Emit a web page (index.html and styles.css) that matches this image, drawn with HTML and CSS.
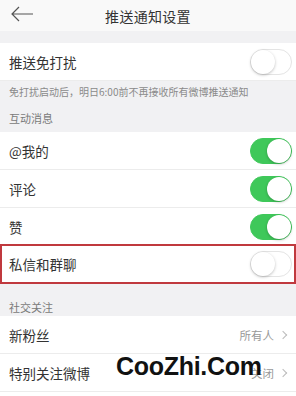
FILE: index.html
```html
<!DOCTYPE html>
<html lang="zh">
<head>
<meta charset="utf-8">
<link rel="stylesheet" href="styles.css">
</head>
<body>
<div class="page">
  <header class="header">
    <svg class="back" width="24" height="16" viewBox="0 0 24 16"><path d="M23 8H2M9 1L2 8l7 7" fill="none" stroke="#555" stroke-width="1.2"/></svg>
    <div class="title">推送通知设置</div>
  </header>
  <div class="gap"></div>
  <div class="row"><span class="label">推送免打扰</span><span class="toggle"></span></div>
  <div class="note">免打扰启动后，明日6:00前不再接收所有微博推送通知</div>
  <div class="section">互动消息</div>
  <div class="row"><span class="label">@我的</span><span class="toggle on"></span></div>
  <div class="row"><span class="label">评论</span><span class="toggle on"></span></div>
  <div class="row"><span class="label">赞</span><span class="toggle on"></span></div>
  <div class="row boxed"><span class="label">私信和群聊</span><span class="toggle"></span></div>
  <div class="section social">社交关注</div>
  <div class="row"><span class="label">新粉丝</span><span class="value">所有人<span class="chev"></span></span></div>
  <div class="row"><span class="label">特别关注微博</span><span class="value">关闭<span class="chev"></span></span></div>
  <div class="row"></div>
  <div class="watermark">CooZhi.Com</div>
</div>
</body>
</html>
```
FILE: styles.css
```css
* { box-sizing: border-box; }
html, body { margin: 0; padding: 0; }
body { font-family: "Noto Sans CJK SC", "Liberation Sans", sans-serif; background: #f1f1f3; }
.page { position: relative; width: 296px; height: 396px; overflow: hidden; }
.header { height: 31px; background: #f9f9f9; display: flex; align-items: center; justify-content: center; position: relative; }
.back { position: absolute; left: 10px; top: 6px; }
.title { font-size: 14px; color: #333; letter-spacing: 0.3px; }
.gap { height: 12px; }
.row { height: 38px; background: #fff; display: flex; align-items: center; justify-content: space-between; padding: 0 4px 0 9px; border-bottom: 1px solid #ececec; }
.label { font-size: 13.5px; color: #333; }
.toggle { width: 42px; height: 26px; border-radius: 13px; border: 1px solid #e4e4e4; background: #fff; position: relative; }
.toggle::after { content: ""; position: absolute; left: 0; top: 0; width: 24px; height: 24px; border-radius: 50%; background: #fff; box-shadow: 0 1px 3px rgba(0,0,0,0.25); }
.toggle.on { background: #3fc85a; border-color: #3fc85a; }
.toggle.on::after { left: 16px; }
.note { font-size: 10px; color: #8a8a8a; padding: 4px 9px 0; height: 26px; line-height: 14px; border-top: 0; }
.section { font-size: 11px; color: #7a7a7a; padding: 4px 9px 0; height: 25px; line-height: 14px; }
.section.social { padding-top: 16px; height: 32px; }
.boxed { border: 2px solid #c0393e; height: 40px; margin-top: -2px; padding-left: 7px; padding-right: 2px; }
.value { font-size: 11.5px; color: #999; display: flex; align-items: center; gap: 6px; }
.chev { width: 6px; height: 6px; border-right: 1.2px solid #bbb; border-top: 1.2px solid #bbb; transform: rotate(45deg); margin-right: 6px; }
.watermark { position: absolute; left: 116px; top: 352px; font-family: "Liberation Sans", sans-serif; font-weight: bold; font-size: 25px; color: #111; letter-spacing: -0.3px; }
```
